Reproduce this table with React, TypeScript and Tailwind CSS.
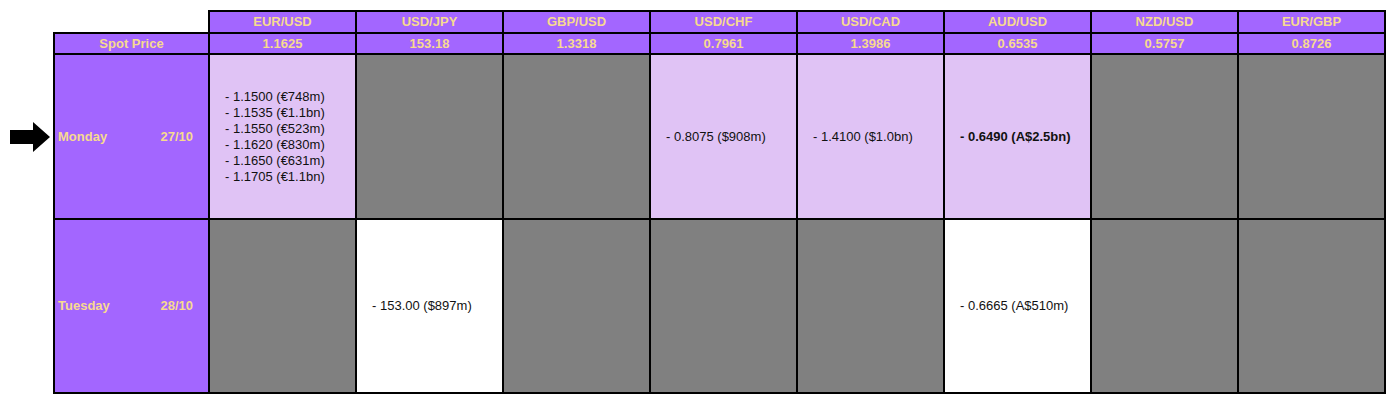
import React from "react";

const pairs = ["EUR/USD", "USD/JPY", "GBP/USD", "USD/CHF", "USD/CAD", "AUD/USD", "NZD/USD", "EUR/GBP"];
const spots = ["1.1625", "153.18", "1.3318", "0.7961", "1.3986", "0.6535", "0.5757", "0.8726"];

type Cell = { bg: "gray" | "lav" | "white"; lines?: string[]; bold?: boolean };

const monday: Cell[] = [
  { bg: "lav", lines: ["- 1.1500 (€748m)", "- 1.1535 (€1.1bn)", "- 1.1550 (€523m)", "- 1.1620 (€830m)", "- 1.1650 (€631m)", "- 1.1705 (€1.1bn)"] },
  { bg: "gray" },
  { bg: "gray" },
  { bg: "lav", lines: ["- 0.8075 ($908m)"] },
  { bg: "lav", lines: ["- 1.4100 ($1.0bn)"] },
  { bg: "lav", lines: ["- 0.6490 (A$2.5bn)"], bold: true },
  { bg: "gray" },
  { bg: "gray" },
];

const tuesday: Cell[] = [
  { bg: "gray" },
  { bg: "white", lines: ["- 153.00 ($897m)"] },
  { bg: "gray" },
  { bg: "gray" },
  { bg: "gray" },
  { bg: "white", lines: ["- 0.6665 (A$510m)"] },
  { bg: "gray" },
  { bg: "gray" },
];

function DataCell({ c, h }: { c: Cell; h: string }) {
  const bg = c.bg === "gray" ? "bg-[#808080]" : c.bg === "lav" ? "bg-[#e0c3f5]" : "bg-white";
  return (
    <div className={`${bg} ${h} border-r-2 border-b-2 border-black flex flex-col justify-center pl-[15px] text-[13px] leading-[16px] text-[#111] ${c.bold ? "font-bold" : ""}`}>
      {c.lines?.map((l, i) => (
        <div key={i} className="whitespace-nowrap">{l}</div>
      ))}
    </div>
  );
}

function Arrow() {
  return (
    <svg width="40" height="30" viewBox="0 0 40 30">
      <polygon points="0,8 23,8 23,0 40,15 23,30 23,22 0,22" fill="#000" />
    </svg>
  );
}

export default function App() {
  return (
    <div className="w-[1397px] h-[400px] bg-white pt-[10px] font-['Liberation_Sans',Arial,sans-serif]">
      <div className="grid grid-cols-[53px_157px_repeat(8,147px)]">
        {/* header row */}
        <div className="h-[24px]" />
        <div className="h-[24px] border-r-2 border-b-2 border-black" />
        {pairs.map((p) => (
          <div key={p} className="h-[24px] bg-[#a366ff] border-t-2 border-r-2 border-b-2 border-black flex items-center justify-center text-[13px] font-bold text-[#f7da8f]">
            {p}
          </div>
        ))}
        {/* spot row */}
        <div className="h-[21px]" />
        <div className="h-[21px] bg-[#a366ff] border-l-2 border-r-2 border-b-2 border-black flex items-center justify-center text-[13px] font-bold text-[#f7da8f]">
          Spot Price
        </div>
        {spots.map((s) => (
          <div key={s} className="h-[21px] bg-[#a366ff] border-r-2 border-b-2 border-black flex items-center justify-center text-[13px] font-bold text-[#f7da8f]">
            {s}
          </div>
        ))}
        {/* monday */}
        <div className="h-[165px] flex items-center pl-[10px] pb-[2px]">
          <Arrow />
        </div>
        <div className="h-[165px] bg-[#a366ff] border-l-2 border-r-2 border-b-2 border-black flex items-center justify-between pl-[3px] pr-[15px] text-[13px] font-bold text-[#f7da8f]">
          <span>Monday</span>
          <span>27/10</span>
        </div>
        {monday.map((c, i) => (
          <DataCell key={i} c={c} h="h-[165px]" />
        ))}
        {/* tuesday */}
        <div className="h-[174px]" />
        <div className="h-[174px] bg-[#a366ff] border-l-2 border-r-2 border-b-2 border-black flex items-center justify-between pl-[3px] pr-[15px] text-[13px] font-bold text-[#f7da8f]">
          <span>Tuesday</span>
          <span>28/10</span>
        </div>
        {tuesday.map((c, i) => (
          <DataCell key={i} c={c} h="h-[174px]" />
        ))}
      </div>
    </div>
  );
}
